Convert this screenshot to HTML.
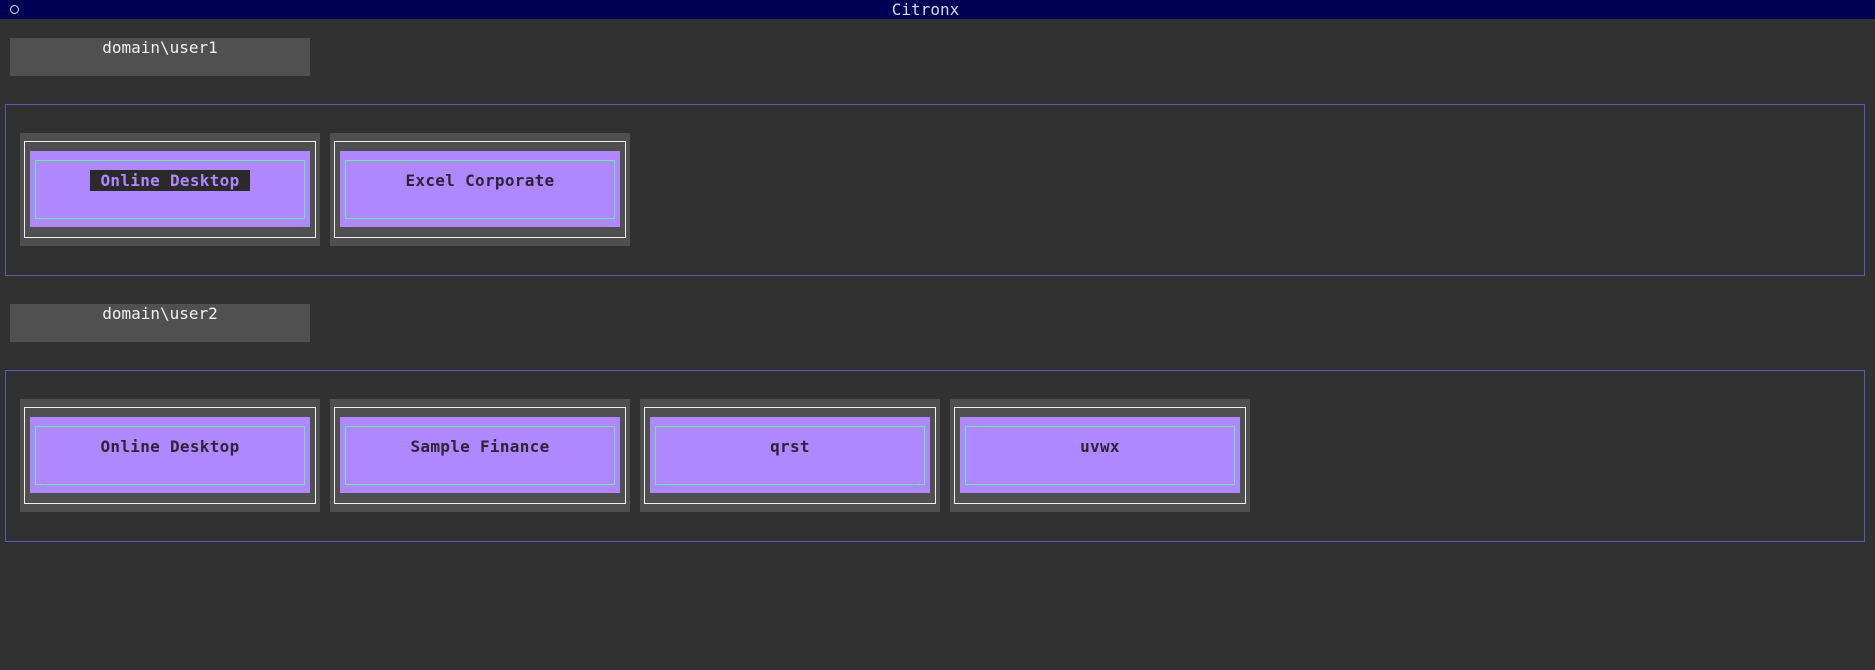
<!DOCTYPE html>
<html><head><meta charset="utf-8"><style>
*{margin:0;padding:0;box-sizing:border-box}
body{width:1875px;height:670px;background:#313131;position:relative;overflow:hidden;font-family:"DejaVu Sans Mono","Liberation Mono",monospace}
.title{position:absolute;left:0;top:0;width:1875px;height:19px;background:#000055;color:#d8d8e8;font-size:16px;line-height:19px;text-align:center;padding-right:24px}
.circ{position:absolute;left:10px;top:5px;width:9px;height:9px;border:1.5px solid #e0e0e0;border-radius:50%}
.user{position:absolute;left:10px;width:300px;height:38px;background:#505050;color:#f0f0f0;font-size:16px;text-align:center;line-height:20px;padding-top:0px}
.grp{position:absolute;left:5px;width:1860px;height:172px;border:1px solid #5a5ab8}
.tile{position:absolute;width:300px;height:113px;background:#4f4f4f}
.wb{position:absolute;left:4px;top:8px;width:292px;height:97px;border:1.5px solid #f0f0f0}
.pu{position:absolute;left:10px;top:18px;width:280px;height:76px;background:#af87ff}
.gr{position:absolute;left:15px;top:27px;width:270px;height:59px;border:1.5px solid #5fef9f}
.tx{position:absolute;left:0;top:38px;width:300px;text-align:center;font-weight:bold;font-size:16px;line-height:20px;color:#2e2436;letter-spacing:0.3px}
.sel{background:#2a2a2a;color:#af87ff;padding:1px 10px}
</style></head><body>
<div class="title"><div class="circ"></div>Citronx</div>
<div class="user" style="top:38px">domain\user1</div>
<div class="grp" style="top:104px"></div>
<div class="tile" style="left:20px;top:133px"><div class="wb"></div><div class="pu"></div><div class="gr"></div><div class="tx"><span class="sel">Online Desktop</span></div></div>
<div class="tile" style="left:330px;top:133px"><div class="wb"></div><div class="pu"></div><div class="gr"></div><div class="tx">Excel Corporate</div></div>
<div class="user" style="top:304px">domain\user2</div>
<div class="grp" style="top:370px"></div>
<div class="tile" style="left:20px;top:399px"><div class="wb"></div><div class="pu"></div><div class="gr"></div><div class="tx">Online Desktop</div></div>
<div class="tile" style="left:330px;top:399px"><div class="wb"></div><div class="pu"></div><div class="gr"></div><div class="tx">Sample Finance</div></div>
<div class="tile" style="left:640px;top:399px"><div class="wb"></div><div class="pu"></div><div class="gr"></div><div class="tx">qrst</div></div>
<div class="tile" style="left:950px;top:399px"><div class="wb"></div><div class="pu"></div><div class="gr"></div><div class="tx">uvwx</div></div>
</body></html>
